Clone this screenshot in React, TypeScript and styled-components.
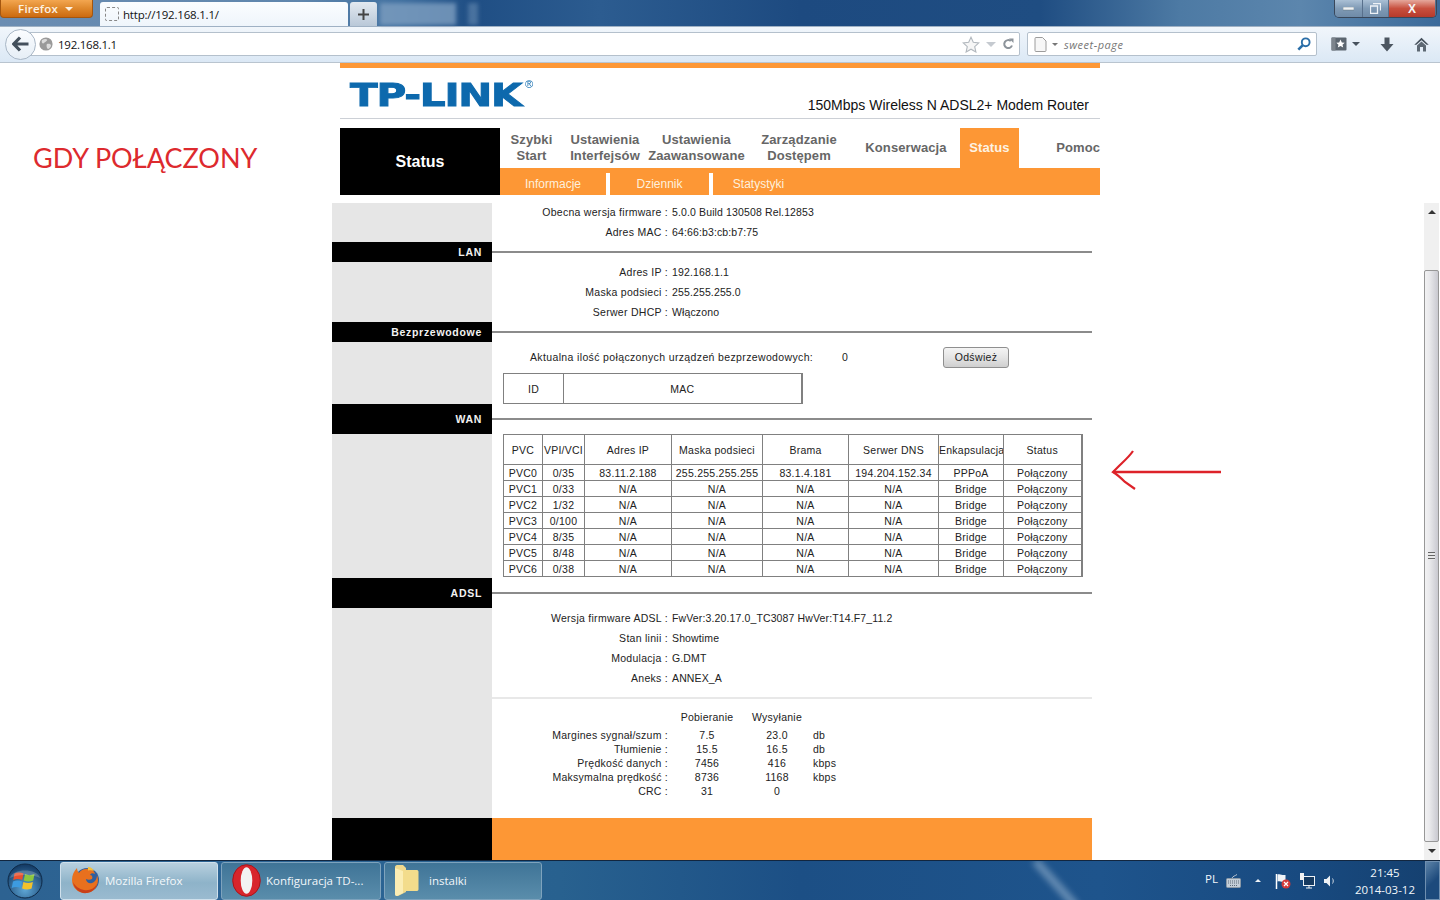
import styled, { createGlobalStyle } from "styled-components";

import type { FC } from "react";

const ORANGE = "#fd9735";
const SIDE_GRAY = "#e6e6e6";
const UI_FONT = '"Open Sans", "Liberation Sans", sans-serif';
const PAGE_FONT = '"Liberation Sans", Arial, sans-serif';

const GlobalStyle = createGlobalStyle`
    html, body {
        margin: 0;
        padding: 0;
        height: 100%;
        overflow: hidden;
        background: #fff;
    }
    * { box-sizing: border-box; }
`;

const Screen = styled.div`
    width: 1440px;
    height: 900px;
    display: flex;
    flex-flow: column;
    overflow: hidden;
    position: relative;
`;

/* ---- browser chrome ---- */

const TitleBar = styled.div`
    height: 26px;
    flex: none;
    display: flex;
    align-items: flex-start;
    background: linear-gradient(90deg, #6b8db2 0, #5f86ad 300px, #3f6f9f 400px, #1f4e84 470px, #2c5c90 600px, #1d4a80 800px, #1f4d82 1040px, #4d7aa4 1180px, #5c86ad 1300px, #3b6a9a 1440px);
`;

const FirefoxButton = styled.div`
    width: 93px;
    height: 18px;
    flex: none;
    display: flex;
    align-items: center;
    justify-content: center;
    gap: 7px;
    padding-right: 2px;
    border: 1px solid #a4560f;
    border-top: none;
    border-radius: 0 0 4px 4px;
    background: linear-gradient(#f3a650, #e08a2e 45%, #cc6a10);
    font: 600 11.5px ${UI_FONT};
    color: #fdf2e2;
    letter-spacing: .2px;
`;

const Caret = styled.span<{ $color?: string; $size?: number; $up?: boolean }>`
    display: inline-block;
    width: 0;
    height: 0;
    border-left: ${p => p.$size ?? 4}px solid transparent;
    border-right: ${p => p.$size ?? 4}px solid transparent;
    ${p => (p.$up ? "border-bottom" : "border-top")}: ${p => p.$size ?? 4}px solid ${p => p.$color ?? "#fff"};
`;

const Tab = styled.div`
    width: 248px;
    height: 24px;
    margin: 2px 0 0 7px;
    flex: none;
    display: flex;
    align-items: center;
    gap: 4px;
    padding-left: 5px;
    background: linear-gradient(#fbfdff, #eff5fb);
    border-radius: 3px 3px 0 0;
    font: 11.5px ${UI_FONT};
    letter-spacing: -.2px;
    color: #111;
`;

const TabFavicon = styled.span`
    width: 14px;
    height: 14px;
    border: 1px dashed #888;
    border-radius: 2px;
`;

const NewTabButton = styled.div`
    width: 27px;
    height: 24px;
    margin: 2px 0 0 2px;
    flex: none;
    display: flex;
    align-items: center;
    justify-content: center;
    background: linear-gradient(#e3e9f0, #b9c8d8);
    border-radius: 3px 3px 0 0;
    color: #333;
`;

const BlurredTab = styled.div<{ $width: number; $left: number }>`
    width: ${p => p.$width}px;
    height: 22px;
    margin: 3px 0 0 ${p => p.$left}px;
    flex: none;
    background: #7d9ec0;
    filter: blur(2px);
    opacity: ${p => (p.$width < 20 ? 0.45 : 0.8)};
`;

const WindowControls = styled.div`
    margin-left: auto;
    margin-right: 3px;
    width: 103px;
    height: 18px;
    flex: none;
    display: flex;
    border: 1px solid #39475a;
    border-top: none;
    border-radius: 0 0 5px 5px;
    overflow: hidden;
`;

const WindowButton = styled.div<{ $width: number; $close?: boolean }>`
    width: ${p => p.$width}px;
    display: flex;
    align-items: center;
    justify-content: center;
    border-right: 1px solid #58708c;
    background: ${p => (p.$close ? "linear-gradient(#e5a89c, #c8503e 50%, #b63a2b)" : "linear-gradient(#aac0d5, #7f9ab5 50%, #6f8ba8)")};
    font: bold 12px ${PAGE_FONT};
    color: #f4f4f4;
`;

const Toolbar = styled.div`
    height: 37px;
    flex: none;
    display: flex;
    align-items: center;
    padding: 0 11px 1px 5px;
    background: linear-gradient(#f1f6fb, #dbe8f5);
    border-top: 1px solid #9fb1c4;
    border-bottom: 1px solid #b9c4cf;
`;

const BackButton = styled.div`
    width: 31px;
    height: 31px;
    margin-right: -16px;
    flex: none;
    z-index: 1;
    display: flex;
    align-items: center;
    justify-content: center;
    border: 1px solid #a9b7c6;
    border-radius: 50%;
    background: linear-gradient(#fbfdff, #e6eef6);
`;

const Field = styled.div<{ $width: number }>`
    width: ${p => p.$width}px;
    height: 24px;
    flex: none;
    display: flex;
    align-items: center;
    background: #fff;
    border: 1px solid #b4c0cc;
    border-radius: 2px;
`;

const UrlField = styled(Field)`
    padding-left: 18px;
`;

const SearchField = styled(Field)`
    margin-left: 7px;
    padding-left: 6px;
    gap: 5px;
`;

const UrlText = styled.span`
    margin-left: 5px;
    font: 11.5px ${UI_FONT};
    letter-spacing: -.25px;
    color: #111;
`;

const SearchText = styled.span`
    margin-left: 1px;
    font: italic 11px ${UI_FONT};
    letter-spacing: .5px;
    color: #777;
`;

const FieldIcons = styled.div`
    margin-left: auto;
    display: flex;
    align-items: center;
    gap: 6px;
    padding-right: 5px;
`;

const Toolbuttons = styled.div`
    flex: 1;
    display: flex;
    align-items: center;
    justify-content: space-between;
    padding-left: 14px;
`;

const GroupedIcon = styled.div`
    display: flex;
    align-items: center;
    gap: 5px;
`;

/* ---- page ---- */

const Page = styled.div`
    flex: 1;
    min-height: 0;
    display: flex;
    flex-flow: column;
    background: #fff;
    position: relative;
    font-family: ${PAGE_FONT};
`;

const TopFrame = styled.header`
    width: 760px;
    margin-left: 340px;
    flex: none;
`;

const TopStrip = styled.div`
    height: 5px;
    background: ${ORANGE};
`;

const BrandRow = styled.div`
    height: 51px;
    display: flex;
    align-items: flex-start;
    justify-content: space-between;
    padding: 9px 11px 0 10px;
    border-bottom: 1px solid #ccd0d6;
`;

const Logo = styled.div`
    display: inline-block;
    font: bold 32px/36px "DejaVu Sans", sans-serif;
    letter-spacing: -1px;
    color: #0d69ad;
    -webkit-text-stroke: .9px #0d69ad;
    transform: scaleX(1.27);
    transform-origin: left center;
    position: relative;
`;

const LogoMark = styled.sup`
    position: absolute;
    left: 137px;
    top: 1px;
    font: 11px/13px ${PAGE_FONT};
    letter-spacing: 0;
    -webkit-text-stroke: 0;
    transform: scaleX(.8);
    color: #0d69ad;
`;

const Tagline = styled.div`
    margin-top: 20px;
    font-size: 14px;
    line-height: 16px;
    color: #111;
`;

const NavRow = styled.nav`
    margin-top: 9px;
    height: 67px;
    display: flex;
`;

const NavTitle = styled.div`
    width: 160px;
    flex: none;
    display: flex;
    align-items: center;
    justify-content: center;
    padding-top: 1px;
    background: #000;
    font-weight: bold;
    font-size: 16px;
    color: #fff;
`;

const NavMain = styled.div`
    flex: 1;
    display: flex;
    flex-flow: column;
`;

const MenuRow = styled.div`
    height: 40px;
    display: flex;
`;

const MenuItem = styled.div<{ $width: number; $active?: boolean; $end?: boolean }>`
    width: ${p => p.$width}px;
    flex: none;
    display: flex;
    align-items: center;
    justify-content: ${p => (p.$end ? "flex-end" : "center")};
    text-align: center;
    white-space: pre-line;
    font-size: 13px;
    line-height: 16px;
    font-weight: bold;
    letter-spacing: .1px;
    background: ${p => (p.$active ? ORANGE : "transparent")};
    color: ${p => (p.$active ? "#fdf3e4" : "#666")};
`;

const SubBar = styled.div`
    flex: 1;
    display: flex;
    align-items: flex-end;
    background: ${ORANGE};
`;

const SubItem = styled.div<{ $width: number; $rule?: boolean }>`
    width: ${p => p.$width}px;
    height: 22px;
    display: flex;
    align-items: center;
    justify-content: center;
    font-size: 12px;
    color: #fdf0dc;
    border-right: ${p => (p.$rule ? "4px solid #fff" : "none")};
`;

const LowerFrame = styled.div`
    flex: 1;
    min-height: 0;
    margin-top: 8px;
    display: flex;
    justify-content: space-between;
    padding-left: 332px;
    padding-right: 1px;
`;

const StatusPage = styled.main`
    width: 760px;
    display: grid;
    grid-template-columns: 160px 600px;
    grid-auto-rows: min-content;
    font-size: 10.5px;
    letter-spacing: .25px;
    color: #222;
`;

const SideFill = styled.div<{ $height: number }>`
    height: ${p => p.$height}px;
    background: ${SIDE_GRAY};
`;

const SideHead = styled.div`
    background: #000;
    color: #f2f2f2;
    font-size: 10.5px;
    font-weight: bold;
    letter-spacing: .7px;
    display: flex;
    align-items: center;
    justify-content: flex-end;
    padding-right: 10px;
`;

const RuleCell = styled.div<{ $height: number }>`
    height: ${p => p.$height}px;
    display: flex;
    align-items: center;
`;

const Rule = styled.div`
    width: 100%;
    height: 2px;
    background: #8b8b8b;
`;

const Body = styled.div<{ $height: number; $bottom?: boolean }>`
    height: ${p => p.$height}px;
    display: flex;
    flex-flow: column;
    justify-content: ${p => (p.$bottom ? "flex-end" : "flex-start")};
    overflow: hidden;
`;

const InfoRow = styled.div`
    flex: none;
    height: 20px;
    display: grid;
    grid-template-columns: 176px 1fr;
    column-gap: 4px;
    align-items: center;
    white-space: nowrap;
`;

const InfoLabel = styled.span`
    text-align: right;
    letter-spacing: .28px;
`;

const InfoValue = styled.span`
    letter-spacing: .13px;
`;

const ClientsRow = styled.div`
    height: 30px;
    margin-bottom: 1px;
    flex: none;
    display: grid;
    grid-template-columns: 312px 101px 66px;
    align-items: center;
    padding-left: 38px;
    letter-spacing: .36px;
    white-space: nowrap;
`;

const RefreshButton = styled.button`
    height: 21px;
    padding: 0;
    border: 1px solid #8f8f8f;
    border-radius: 3px;
    background: linear-gradient(#f4f4f4, #e4e4e4 50%, #cfcfcf);
    font: 10.5px ${PAGE_FONT};
    letter-spacing: .35px;
    color: #222;
`;

const Grid = styled.table<{ $width: number }>`
    width: ${p => p.$width}px;
    margin-left: 11px;
    border-collapse: collapse;
    table-layout: fixed;
    border: 1px solid #808080;
    border-right-width: 2px;

    td, th {
        padding: 0;
        border: 1px solid #808080;
        text-align: center;
        font-weight: normal;
        white-space: nowrap;
        overflow: hidden;
    }
`;

const TallRow = styled.tr<{ $height: number }>`
    height: ${p => p.$height}px;
`;

const SoftRule = styled.div`
    flex: none;
    height: 2px;
    margin: 9px 0 12px;
    background: #e8e8e8;
`;

const StatsGrid = styled.div`
    display: grid;
    grid-template-columns: 180px 70px 70px 1fr;
    grid-template-rows: 17px;
    grid-auto-rows: 14px;
    align-items: center;
    justify-items: center;
    white-space: nowrap;
`;

const StatsHead = styled.span`
    align-self: start;
`;

const StatsLabel = styled.span`
    justify-self: end;
    padding-right: 4px;
`;

const StatsUnit = styled.span`
    justify-self: start;
    padding-left: 1px;
`;

const FooterBlack = styled.div`
    height: 42px;
    background: #000;
`;

const FooterOrange = styled.div`
    height: 42px;
    background: ${ORANGE};
`;

const Scrollbar = styled.div`
    width: 15px;
    display: flex;
    flex-flow: column;
    background: #f0f0f0;
`;

const ScrollArrow = styled.div<{ $height: number; $top?: boolean }>`
    height: ${p => p.$height}px;
    flex: none;
    display: flex;
    align-items: ${p => (p.$top ? "flex-start" : "center")};
    justify-content: center;
    padding-top: ${p => (p.$top ? 7 : 0)}px;
`;

const ScrollThumb = styled.div`
    flex: 1;
    display: flex;
    align-items: center;
    justify-content: center;
    border: 1px solid #979797;
    border-radius: 2px;
    background: linear-gradient(90deg, #f2f2f3, #e9e9ec 35%, #c9c9d0);
`;

const Grip = styled.div`
    width: 7px;
    height: 8px;
    background: repeating-linear-gradient(#666 0 1px, #e8e8e8 1px 3px);
`;

const Annotation = styled.div`
    position: absolute;
    left: 33px;
    top: 77px;
    font: 27px/36px Lato, "Open Sans", sans-serif;
    color: #dd2a2e;
    white-space: nowrap;
`;

const ArrowMark = styled.svg`
    position: absolute;
    left: 1110px;
    top: 385px;
`;

/* ---- taskbar ---- */

const Taskbar = styled.footer`
    height: 40px;
    flex: none;
    display: flex;
    align-items: center;
    position: relative;
    overflow: hidden;
    border-top: 1px solid #12263f;
    background: linear-gradient(90deg, #2d6291, #2c6596 250px, #28618f 560px, #1c4f85 800px, #1e548c 1100px, #184a80 1300px, #15406f);
    font-family: ${UI_FONT};
    color: #f2f6fa;

    &::before {
        content: "";
        position: absolute;
        left: 1052px;
        top: -8px;
        width: 8px;
        height: 62px;
        background: #a3bdd5;
        opacity: .55;
        filter: blur(3px);
        transform: rotate(-42deg);
    }
`;

const StartOrb = styled.div`
    width: 60px;
    height: 39px;
    flex: none;
    display: flex;
    align-items: center;
    justify-content: center;
    padding-right: 10px;
`;

const TaskButton = styled.div<{ $active?: boolean; $width: number; $pad: number; $gap: number }>`
    width: ${p => p.$width}px;
    height: 38px;
    margin-right: 3px;
    flex: none;
    display: flex;
    align-items: center;
    gap: ${p => p.$gap}px;
    padding-left: ${p => p.$pad}px;
    padding-bottom: 1px;
    font-size: 11.5px;
    border: 1px solid ${p => (p.$active ? "#cfe0ec" : "#7ea3bd")};
    border-radius: 3px;
    background: ${p => (p.$active
        ? "linear-gradient(#b8d0df, #8eb3c9 55%, #9abbd0)"
        : "linear-gradient(#3f7497, #5a8dab)")};
    color: ${p => (p.$active ? "#f4f8fb" : "#f2f6fa")};
`;

const Tray = styled.div`
    margin-left: auto;
    display: flex;
    align-items: center;
    height: 100%;
    position: relative;
`;

const TrayLang = styled.span`
    font-size: 11.5px;
    margin-right: 8px;
    margin-top: -4px;
`;

const TrayIcons = styled.div`
    display: flex;
    align-items: center;
    gap: 8px;
    margin-right: 16px;
`;

const TrayCaret = styled(Caret)`
    margin: 0 6px;
`;

const Clock = styled.div`
    width: 66px;
    text-align: center;
    font-size: 11.5px;
    line-height: 17px;
    margin-right: 7px;
`;

const ShowDesktop = styled.div`
    width: 15px;
    height: 39px;
    border: 1px solid #6f8fb0;
    background: linear-gradient(135deg, #5d83a8, #1d4a7c 55%);
`;

/* ---- drawings ---- */

const BackArrow: FC = () => (
    <svg width="18" height="16" viewBox="0 0 18 16">
        <path d="M8 1.5 1.8 8 8 14.5 M2.5 8H16.5" fill="none" stroke="#44505c" strokeWidth="3.2" strokeLinejoin="miter" />
    </svg>
);

const Globe: FC = () => (
    <svg width="14" height="14" viewBox="0 0 14 14">
        <circle cx="7" cy="7" r="6.6" fill="#9a9a9a" />
        <path d="M3 3c2-1 4-1.5 5-.5S6 5 5 6 2 6 3 3ZM8 7c2-.5 4 0 4 1.500S10 12 9 12 7 8 8 7Z" fill="#dcdcdc" />
    </svg>
);

const Star: FC = () => (
    <svg width="18" height="17" viewBox="0 0 18 17">
        <path d="M9 1.200 11.300 6.300 16.800 6.900 12.700 10.600 13.900 16 9 13.200 4.100 16 5.300 10.600 1.200 6.900 6.700 6.300Z" fill="#f6f6f6" stroke="#b2b8be" strokeWidth="1.100" />
    </svg>
);

const Reload: FC = () => (
    <svg width="12" height="12" viewBox="0 0 12 12">
        <path d="M10 7.500A4 4 0 1 1 8.800 3" fill="none" stroke="#8d949b" strokeWidth="2" />
        <path d="M7 .5h4.500V5Z" fill="#8d949b" />
    </svg>
);

const PageIcon: FC = () => (
    <svg width="13" height="15" viewBox="0 0 13 15">
        <path d="M1 1.500a1 1 0 0 1 1-1h6.500L12 4v9.500a1 1 0 0 1-1 1H2a1 1 0 0 1-1-1Z" fill="#f7f7f7" stroke="#9c9c9c" />
    </svg>
);

const Magnifier: FC = () => (
    <svg width="14" height="14" viewBox="0 0 14 14">
        <circle cx="8.700" cy="5.300" r="3.900" fill="none" stroke="#2a6ea8" strokeWidth="1.900" />
        <path d="M5.800 8.200 1.300 12.700" stroke="#2a6ea8" strokeWidth="2.600" />
    </svg>
);

const BookmarksIcon: FC = () => (
    <svg width="16" height="14" viewBox="0 0 16 14">
        <rect x=".5" y=".5" width="15" height="13" rx="1" fill="#5c6670" />
        <rect x=".5" y=".5" width="4" height="13" fill="#7c848c" />
        <path d="M9.500 2.500 10.800 5.400 13.700 5.700 11.500 7.700 12.200 10.600 9.500 9.100 6.800 10.600 7.500 7.700 5.300 5.700 8.200 5.400Z" fill="#fff" />
    </svg>
);

const DownloadIcon: FC = () => (
    <svg width="14" height="15" viewBox="0 0 14 15">
        <path d="M4.500 .5h5v6.500h4L7 14.500.5 7h4Z" fill="#4c5661" />
    </svg>
);

const HomeIcon: FC = () => (
    <svg width="15" height="15" viewBox="0 0 15 15">
        <path d="M7.500.8 14.700 7.800 12.600 7.800 7.500 3.200 2.400 7.800 .3 7.800Z" fill="#47525d" />
        <path d="M3 8.500 7.500 4.500 12 8.500V14.500H9V10H6V14.500H3Z" fill="#5d6873" />
    </svg>
);

const WindowsOrb: FC = () => (
    <svg width="36" height="36" viewBox="0 0 36 36">
        <defs>
            <radialGradient id="orb" cx="50%" cy="75%" r="70%">
                <stop offset="0" stopColor="#5fa8d8" />
                <stop offset="1" stopColor="#153d68" />
            </radialGradient>
        </defs>
        <circle cx="18" cy="18" r="17" fill="url(#orb)" stroke="#0e2947" />
        <path d="M7.500 10.500c3-1.500 6-1.500 9 0L15.200 17c-3-1.200-6-1.200-9 0Z" fill="#e8502e" />
        <path d="M18 11c3 1.500 6 1.500 9.500 0l-1.300 6.500c-3 1.200-6.200 1.200-9.500 0Z" fill="#8cc63f" />
        <path d="M6 18.500c3-1.200 6-1.200 9 0L13.700 25c-3-1.200-6-1.200-9 0Z" fill="#3d9be0" />
        <path d="M16.400 19c3 1.200 6.200 1.200 9.500 0l-1.300 6.500c-3 1.200-6.200 1.200-9.500 0Z" fill="#f4c22b" />
        <path d="M3 15C5 5 31 5 33 15 26 11 10 11 3 15Z" fill="#fff" opacity=".2" />
    </svg>
);

const FirefoxLogo: FC = () => (
    <svg width="31" height="33" viewBox="0 0 31 33">
        <circle cx="16" cy="16" r="12" fill="#2f5f9f" />
        <path d="M15 5c4-1 8 1 9 5-2-1-4-1-5 1 2 0 3 2 2 4-2 1-4 1-6 0 0 3 3 5 6 4 3-1 5-4 5-8 3 7-1 17-10 18C8 30 1 24 1 16 1 11 3 7 6 4c0 2 1 4 2 5 1-2 4-4 7-4Z" fill="#e8701e" />
        <path d="M2 18c1 7 7 12 14 11 5-1 9-4 10-9-3 5-8 7-13 6-5-1-9-4-11-8Z" fill="#c8401a" />
        <path d="M17 3c3 0 5 2 6 4-2-1-4-1-6-.5Z" fill="#f6c13c" />
    </svg>
);

const OperaLogo: FC = () => (
    <svg width="29" height="33" viewBox="0 0 29 33">
        <ellipse cx="14.500" cy="16.500" rx="13.800" ry="15.800" fill="#d8252c" stroke="#a8141a" />
        <ellipse cx="14.500" cy="16.500" rx="5.800" ry="13.200" fill="#f2f2f2" />
    </svg>
);

const FolderIcon: FC = () => (
    <svg width="25" height="33" viewBox="0 0 25 33">
        <path d="M1 3c0-1 1-2 2-2h6l3 3v24l-8 4c-2 .5-3-1-3-3Z" fill="#efd98e" />
        <path d="M9 6h14c1 0 1.500 1 1.500 2v17c0 1-.5 2-1.500 2H6Z" fill="#f3dc8c" />
        <path d="M1 4 9 7V29L3 32C1 32 1 31 1 29Z" fill="#fbedb4" />
    </svg>
);

const KeyboardIcon: FC = () => (
    <svg width="15" height="14" viewBox="0 0 15 14">
        <path d="M11 .5C9 2 7 2 6 4" fill="none" stroke="#b9c6d3" />
        <rect x=".5" y="4.500" width="14" height="9" rx="1" fill="#c4ced8" stroke="#8a98a6" />
        <path d="M2 7h11M2 9h11M4 11.500h7" stroke="#5c6a78" strokeDasharray="1 1" />
    </svg>
);

const FlagIcon: FC = () => (
    <svg width="16" height="16" viewBox="0 0 16 16">
        <path d="M1.500 1v15" stroke="#fff" strokeWidth="1.500" />
        <path d="M2.500 1.500c3-1 4 1 8 .5v7c-3 .5-5-1.500-8-.5Z" fill="#f0f4f8" />
        <circle cx="11" cy="11" r="4.500" fill="#d43a3a" />
        <path d="M9 9l4 4M13 9l-4 4" stroke="#fff" strokeWidth="1.200" />
    </svg>
);

const NetworkIcon: FC = () => (
    <svg width="16" height="16" viewBox="0 0 16 16">
        <rect x="4.500" y="3.500" width="11" height="9" fill="#163a60" stroke="#eef2f6" />
        <path d="M7 15h6M10 12.500V15" stroke="#eef2f6" />
        <rect x="1" y="0" width="4" height="7" fill="#f2f2f2" />
    </svg>
);

const SpeakerIcon: FC = () => (
    <svg width="13" height="14" viewBox="0 0 13 14">
        <path d="M1 5h2.500L7 1.500v11L3.500 9H1Z" fill="#eef2f6" />
        <path d="M9.500 4.500c1 1.500 1 3.500 0 5" fill="none" stroke="#cfd8e2" />
    </svg>
);

/* ---- data ---- */

const COLUMN_WIDTHS = [39, 42, 87, 91, 86, 90, 65, 78];
const WAN_HEAD = ["PVC", "VPI/VCI", "Adres IP", "Maska podsieci", "Brama", "Serwer DNS", "Enkapsulacja", "Status"];
const WAN_ROWS = [
    ["PVC0", "0/35", "83.11.2.188", "255.255.255.255", "83.1.4.181", "194.204.152.34", "PPPoA", "Połączony"],
    ["PVC1", "0/33", "N/A", "N/A", "N/A", "N/A", "Bridge", "Połączony"],
    ["PVC2", "1/32", "N/A", "N/A", "N/A", "N/A", "Bridge", "Połączony"],
    ["PVC3", "0/100", "N/A", "N/A", "N/A", "N/A", "Bridge", "Połączony"],
    ["PVC4", "8/35", "N/A", "N/A", "N/A", "N/A", "Bridge", "Połączony"],
    ["PVC5", "8/48", "N/A", "N/A", "N/A", "N/A", "Bridge", "Połączony"],
    ["PVC6", "0/38", "N/A", "N/A", "N/A", "N/A", "Bridge", "Połączony"],
];

const STATS = [
    ["Margines sygnał/szum :", "7.5", "23.0", "db"],
    ["Tłumienie :", "15.5", "16.5", "db"],
    ["Prędkość danych :", "7456", "416", "kbps"],
    ["Maksymalna prędkość :", "8736", "1168", "kbps"],
    ["CRC :", "31", "0", ""],
];

const MENU = [
    { label: "Szybki\nStart", width: 63 },
    { label: "Ustawienia\nInterfejsów", width: 84 },
    { label: "Ustawienia\nZaawansowane", width: 99 },
    { label: "Zarządzanie\nDostępem", width: 106 },
    { label: "Konserwacja", width: 108 },
    { label: "Status", width: 59, active: true },
    { label: "Pomoc", width: 81, end: true },
];

const Info: FC<{ label: string; value: string }> = props => (
    <InfoRow>
        <InfoLabel>{props.label} :</InfoLabel>
        <InfoValue>{props.value}</InfoValue>
    </InfoRow>
);

const App: FC = () => (
    <Screen>
        <GlobalStyle />
        <TitleBar>
            <FirefoxButton>Firefox <Caret $size={4} $color="#fdf2e2" /></FirefoxButton>
            <Tab><TabFavicon />http://192.168.1.1/</Tab>
            <NewTabButton>
                <svg width="11" height="11" viewBox="0 0 11 11"><path d="M5.500 0v11M0 5.500h11" stroke="#444" strokeWidth="2" /></svg>
            </NewTabButton>
            <BlurredTab $width={76} $left={3} />
            <BlurredTab $width={10} $left={12} />
            <WindowControls>
                <WindowButton $width={29}>
                    <svg width="11" height="4" viewBox="0 0 11 4"><rect width="11" height="3" fill="#eef2f6" stroke="#566" strokeWidth=".4" /></svg>
                </WindowButton>
                <WindowButton $width={26}>
                    <svg width="11" height="11" viewBox="0 0 11 11"><path d="M3 .5h7.500v7M.5 3h7v7.500h-7Z" fill="none" stroke="#eef2f6" strokeWidth="1.300" /></svg>
                </WindowButton>
                <WindowButton $width={48} $close>X</WindowButton>
            </WindowControls>
        </TitleBar>
        <Toolbar>
            <BackButton><BackArrow /></BackButton>
            <UrlField $width={1000}>
                <Globe />
                <UrlText>192.168.1.1</UrlText>
                <FieldIcons>
                    <Star />
                    <Caret $size={5} $color="#c5cad0" />
                    <Reload />
                </FieldIcons>
            </UrlField>
            <SearchField $width={290}>
                <PageIcon />
                <Caret $size={3} $color="#777" />
                <SearchText>sweet-page</SearchText>
                <FieldIcons><Magnifier /></FieldIcons>
            </SearchField>
            <Toolbuttons>
                <GroupedIcon><BookmarksIcon /><Caret $size={4} $color="#47525d" /></GroupedIcon>
                <DownloadIcon />
                <HomeIcon />
            </Toolbuttons>
        </Toolbar>
        <Page>
            <TopFrame>
                <TopStrip />
                <BrandRow>
                    <Logo>TP-LINK<LogoMark>®</LogoMark></Logo>
                    <Tagline>150Mbps Wireless N ADSL2+ Modem Router</Tagline>
                </BrandRow>
                <NavRow>
                    <NavTitle>Status</NavTitle>
                    <NavMain>
                        <MenuRow>
                            {MENU.map(item => (
                                <MenuItem key={item.label} $width={item.width} $active={item.active} $end={item.end}>{item.label}</MenuItem>
                            ))}
                        </MenuRow>
                        <SubBar>
                            <SubItem $width={110} $rule>Informacje</SubItem>
                            <SubItem $width={103} $rule>Dziennik</SubItem>
                            <SubItem $width={91}>Statystyki</SubItem>
                        </SubBar>
                    </NavMain>
                </NavRow>
            </TopFrame>
            <LowerFrame>
                <StatusPage>
                    <SideFill $height={39} />
                    <Body $height={39} $bottom>
                        <Info label="Obecna wersja firmware" value="5.0.0 Build 130508 Rel.12853" />
                        <Info label="Adres MAC" value="64:66:b3:cb:b7:75" />
                    </Body>

                    <SideHead>LAN</SideHead>
                    <RuleCell $height={20}><Rule /></RuleCell>

                    <SideFill $height={60} />
                    <Body $height={60}>
                        <Info label="Adres IP" value="192.168.1.1" />
                        <Info label="Maska podsieci" value="255.255.255.0" />
                        <Info label="Serwer DHCP" value="Włączono" />
                    </Body>

                    <SideHead>Bezprzewodowe</SideHead>
                    <RuleCell $height={20}><Rule /></RuleCell>

                    <SideFill $height={62} />
                    <Body $height={62}>
                        <ClientsRow>
                            <span>Aktualna ilość połączonych urządzeń bezprzewodowych:</span>
                            <span>0</span>
                            <RefreshButton>Odśwież</RefreshButton>
                        </ClientsRow>
                        <Grid $width={298}>
                            <colgroup>
                                <col width={60} />
                                <col width={238} />
                            </colgroup>
                            <tbody>
                                <TallRow $height={30}>
                                    <td>ID</td>
                                    <td>MAC</td>
                                </TallRow>
                            </tbody>
                        </Grid>
                    </Body>

                    <SideHead>WAN</SideHead>
                    <RuleCell $height={30}><Rule /></RuleCell>

                    <SideFill $height={144} />
                    <Body $height={144}>
                        <Grid $width={578}>
                            <colgroup>
                                {COLUMN_WIDTHS.map((width, i) => <col key={i} width={width} />)}
                            </colgroup>
                            <thead>
                                <TallRow $height={30}>
                                    {WAN_HEAD.map(title => <th key={title}>{title}</th>)}
                                </TallRow>
                            </thead>
                            <tbody>
                                {WAN_ROWS.map(row => (
                                    <TallRow key={row[0]} $height={16}>
                                        {row.map((cell, i) => <td key={i}>{cell}</td>)}
                                    </TallRow>
                                ))}
                            </tbody>
                        </Grid>
                    </Body>

                    <SideHead>ADSL</SideHead>
                    <RuleCell $height={30}><Rule /></RuleCell>

                    <SideFill $height={210} />
                    <Body $height={210}>
                        <Info label="Wersja firmware ADSL" value="FwVer:3.20.17.0_TC3087 HwVer:T14.F7_11.2" />
                        <Info label="Stan linii" value="Showtime" />
                        <Info label="Modulacja" value="G.DMT" />
                        <Info label="Aneks" value="ANNEX_A" />
                        <SoftRule />
                        <StatsGrid>
                            <span />
                            <StatsHead>Pobieranie</StatsHead>
                            <StatsHead>Wysyłanie</StatsHead>
                            <span />
                            {STATS.map(row => [
                                <StatsLabel key={row[0]}>{row[0]}</StatsLabel>,
                                <span key={row[0] + "down"}>{row[1]}</span>,
                                <span key={row[0] + "up"}>{row[2]}</span>,
                                <StatsUnit key={row[0] + "unit"}>{row[3]}</StatsUnit>,
                            ])}
                        </StatsGrid>
                    </Body>

                    <FooterBlack />
                    <FooterOrange />
                </StatusPage>
                <Scrollbar>
                    <ScrollArrow $height={67} $top><Caret $size={4} $color="#333" $up /></ScrollArrow>
                    <ScrollThumb><Grip /></ScrollThumb>
                    <ScrollArrow $height={18}><Caret $size={4} $color="#333" /></ScrollArrow>
                </Scrollbar>
            </LowerFrame>
            <Annotation>GDY POŁĄCZONY</Annotation>
            <ArrowMark width="114" height="44" viewBox="0 0 114 44">
                <path d="M3 24H111" stroke="#dd2229" strokeWidth="2.400" fill="none" />
                <path d="M23 3C19 9 13 14 8 19 6 21 4 23 3 24 8 27 11 30 15 34L25 41" stroke="#dd2229" strokeWidth="2.200" fill="none" />
            </ArrowMark>
        </Page>
        <Taskbar>
            <StartOrb><WindowsOrb /></StartOrb>
            <TaskButton $active $width={158} $pad={10} $gap={3}><FirefoxLogo />Mozilla Firefox</TaskButton>
            <TaskButton $width={160} $pad={10} $gap={5}><OperaLogo />Konfiguracja TD-...</TaskButton>
            <TaskButton $width={158} $pad={9} $gap={10}><FolderIcon />instalki</TaskButton>
            <Tray>
                <TrayLang>PL</TrayLang>
                <TrayIcons>
                    <KeyboardIcon />
                    <TrayCaret $size={3} $color="#eef2f6" $up />
                    <FlagIcon />
                    <NetworkIcon />
                    <SpeakerIcon />
                </TrayIcons>
                <Clock>21:45<br />2014-03-12</Clock>
                <ShowDesktop />
            </Tray>
        </Taskbar>
    </Screen>
);

export default App;
